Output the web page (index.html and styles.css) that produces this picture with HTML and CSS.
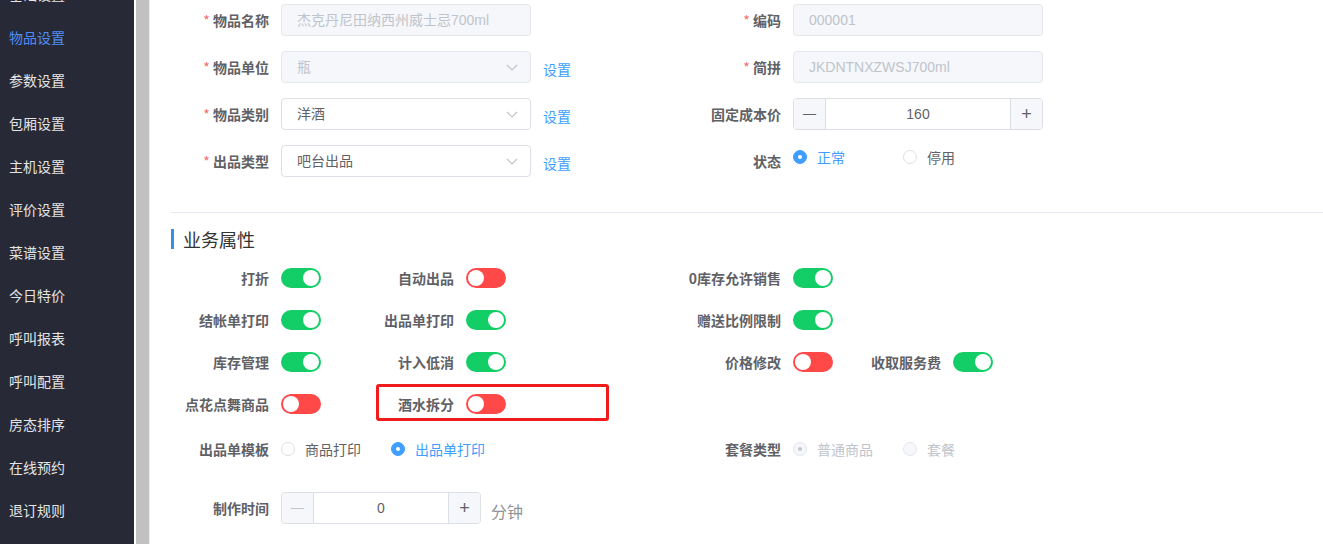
FILE: index.html
```html
<!DOCTYPE html>
<html lang="zh-CN">
<head>
  <meta charset="UTF-8">
  <meta name="viewport" content="width=device-width, initial-scale=1.0">
  <title>物品设置</title>
  <link rel="stylesheet" href="styles.css">
</head>
<body>
  <div class="layout">
    <aside class="sidebar">
      <ul class="menu">
        <li>基础设置</li>
        <li class="active">物品设置</li>
        <li>参数设置</li>
        <li>包厢设置</li>
        <li>主机设置</li>
        <li>评价设置</li>
        <li>菜谱设置</li>
        <li>今日特价</li>
        <li>呼叫报表</li>
        <li>呼叫配置</li>
        <li>房态排序</li>
        <li>在线预约</li>
        <li>退订规则</li>
      </ul>
    </aside>
    <div class="gutter"></div>

    <main class="content">
      <div class="form-row">
        <div class="form-item half">
          <label class="form-label"><span class="req">*</span> 物品名称</label>
          <div class="input disabled">杰克丹尼田纳西州威士忌700ml</div>
        </div>
        <div class="form-item">
          <label class="form-label"><span class="req">*</span> 编码</label>
          <div class="input disabled">000001</div>
        </div>
      </div>

      <div class="form-row">
        <div class="form-item half">
          <label class="form-label"><span class="req">*</span> 物品单位</label>
          <div class="input select disabled">瓶
            <svg class="arrow" width="12" height="7" viewBox="0 0 12 7"><path d="M1 1 L6 6 L11 1" fill="none" stroke="#c0c4cc" stroke-width="1.2"/></svg>
          </div>
          <a class="link">设置</a>
        </div>
        <div class="form-item">
          <label class="form-label"><span class="req">*</span> 简拼</label>
          <div class="input disabled">JKDNTNXZWSJ700ml</div>
        </div>
      </div>

      <div class="form-row">
        <div class="form-item half">
          <label class="form-label"><span class="req">*</span> 物品类别</label>
          <div class="input select">洋酒
            <svg class="arrow" width="12" height="7" viewBox="0 0 12 7"><path d="M1 1 L6 6 L11 1" fill="none" stroke="#c0c4cc" stroke-width="1.2"/></svg>
          </div>
          <a class="link">设置</a>
        </div>
        <div class="form-item">
          <label class="form-label">固定成本价</label>
          <div class="number">
            <span class="num-btn">&#8212;</span>
            <span class="num-value">160</span>
            <span class="num-btn">+</span>
          </div>
        </div>
      </div>

      <div class="form-row">
        <div class="form-item half">
          <label class="form-label"><span class="req">*</span> 出品类型</label>
          <div class="input select">吧台出品
            <svg class="arrow" width="12" height="7" viewBox="0 0 12 7"><path d="M1 1 L6 6 L11 1" fill="none" stroke="#c0c4cc" stroke-width="1.2"/></svg>
          </div>
          <a class="link">设置</a>
        </div>
        <div class="form-item status">
          <label class="form-label">状态</label>
          <span class="radio checked"><i></i>正常</span>
          <span class="radio"><i></i>停用</span>
        </div>
      </div>

      <div class="divider"></div>

      <h3 class="section-title">业务属性</h3>

      <div class="switch-row">
        <div class="sw-item c1"><label class="form-label">打折</label><span class="switch on"></span></div>
        <div class="sw-item c2"><label class="form-label">自动出品</label><span class="switch off"></span></div>
        <div class="sw-item c3"><label class="form-label">0库存允许销售</label><span class="switch on"></span></div>
      </div>
      <div class="switch-row">
        <div class="sw-item c1"><label class="form-label">结帐单打印</label><span class="switch on"></span></div>
        <div class="sw-item c2"><label class="form-label">出品单打印</label><span class="switch on"></span></div>
        <div class="sw-item c3"><label class="form-label">赠送比例限制</label><span class="switch on"></span></div>
      </div>
      <div class="switch-row">
        <div class="sw-item c1"><label class="form-label">库存管理</label><span class="switch on"></span></div>
        <div class="sw-item c2"><label class="form-label">计入低消</label><span class="switch on"></span></div>
        <div class="sw-item c3"><label class="form-label">价格修改</label><span class="switch off"></span></div>
        <div class="sw-item c4"><label class="form-label">收取服务费</label><span class="switch on"></span></div>
      </div>
      <div class="switch-row">
        <div class="sw-item c1"><label class="form-label">点花点舞商品</label><span class="switch off"></span></div>
        <div class="sw-item c2 marked"><label class="form-label">酒水拆分</label><span class="switch off"></span></div>
      </div>

      <div class="radio-row">
        <div class="form-item half">
          <label class="form-label">出品单模板</label>
          <span class="radio"><i></i>商品打印</span>
          <span class="radio checked"><i></i>出品单打印</span>
        </div>
        <div class="form-item">
          <label class="form-label">套餐类型</label>
          <span class="radio checked is-disabled"><i></i>普通商品</span>
          <span class="radio is-disabled"><i></i>套餐</span>
        </div>
      </div>

      <div class="form-row time-row">
        <div class="form-item">
          <label class="form-label">制作时间</label>
          <div class="number short">
            <span class="num-btn muted">&#8212;</span>
            <span class="num-value">0</span>
            <span class="num-btn">+</span>
          </div>
          <span class="unit">分钟</span>
        </div>
      </div>
    </main>
  </div>
</body>
</html>
```

FILE: styles.css
```css
body {
  margin: 0;
  font-family: "Liberation Sans", "Noto Sans CJK SC", sans-serif;
  font-size: 14px;
  color: #606266;
  background: #fff;
}

.layout {
  display: flex;
  height: 544px;
  overflow: hidden;
}

.sidebar {
  width: 134px;
  flex: none;
  background-color: #272a36;
  overflow: hidden;
}

.menu {
  list-style: none;
  margin: -27px 0 0 0;
  padding: 0;
}

.menu li {
  height: 43px;
  line-height: 43px;
  padding-left: 9px;
  color: #e4e4e4;
  font-family: "Noto Sans CJK SC", sans-serif;
  font-size: 14px;
}

.menu li.active {
  color: #4f8ef7;
}

.gutter {
  width: 13px;
  flex: none;
  margin-left: 2px;
  background-color: #c1c1c1;
  border-right: 1px solid #ececec;
}

.content {
  flex: 1;
  padding: 4px 0 0 21px;
}

/* form rows */
.form-row {
  display: flex;
  height: 32px;
  margin-bottom: 15px;
}

.form-item {
  display: flex;
  align-items: center;
}

.form-item.half {
  width: 512px;
  flex: none;
}

.form-label {
  width: 110px;
  flex: none;
  box-sizing: border-box;
  padding-right: 12px;
  text-align: right;
  font-family: "Noto Sans CJK SC", sans-serif;
  font-weight: bold;
  color: #5f6166;
  white-space: nowrap;
}

.req {
  color: #f56c6c;
  font-weight: normal;
}

.input {
  position: relative;
  width: 250px;
  height: 32px;
  box-sizing: border-box;
  border: 1px solid #dcdfe6;
  border-radius: 4px;
  padding: 0 15px;
  line-height: 30px;
  color: #606266;
  background: #fff;
}

.input.disabled {
  background-color: #f5f7fa;
  border-color: #e4e7ed;
  color: #c0c4cc;
}

.input .arrow {
  position: absolute;
  right: 12px;
  top: 12px;
}

.link {
  margin-left: 12px;
  margin-top: 3px;
  color: #409eff;
  font-family: "Noto Sans CJK SC", sans-serif;
}

.number {
  display: flex;
  width: 250px;
  height: 32px;
  box-sizing: border-box;
  border: 1px solid #dcdfe6;
  border-radius: 4px;
  overflow: hidden;
}

.number.short {
  width: 200px;
}

.num-btn {
  width: 31px;
  flex: none;
  background-color: #f5f7fa;
  text-align: center;
  line-height: 30px;
  color: #606266;
  font-size: 13px;
}

.num-btn:first-child {
  border-right: 1px solid #dcdfe6;
}

.num-btn:last-child {
  border-left: 1px solid #dcdfe6;
  font-size: 18px;
}

.num-btn.muted {
  color: #c0c4cc;
}

.num-value {
  flex: 1;
  text-align: center;
  line-height: 30px;
  color: #606266;
}

.unit {
  margin-left: 10px;
  margin-top: 6px;
  font-size: 16px;
  color: #909399;
  font-family: "Noto Sans CJK SC", sans-serif;
}

/* radios */
.radio {
  display: flex;
  align-items: center;
  width: 110px;
  flex: none;
  color: #606266;
  font-family: "Noto Sans CJK SC", sans-serif;
  white-space: nowrap;
}

.radio i {
  width: 14px;
  height: 14px;
  box-sizing: border-box;
  border: 1px solid #dcdfe6;
  border-radius: 50%;
  margin-right: 10px;
  background: #fff;
  position: relative;
}

.radio.checked {
  color: #409eff;
}

.radio.checked i {
  background-color: #409eff;
  border-color: #409eff;
}

.radio.checked i::after {
  content: "";
  position: absolute;
  left: 4px;
  top: 4px;
  width: 4px;
  height: 4px;
  border-radius: 50%;
  background: #fff;
}

.radio.is-disabled {
  color: #c0c4cc;
}

.radio.is-disabled i {
  background-color: #f5f7fa;
  border-color: #e4e7ed;
}

.radio.checked.is-disabled i::after {
  background: #c0c4cc;
}

.status .radio {
  margin-top: -8px;
}

.divider {
  height: 1px;
  background-color: #e8eaf1;
  margin-top: 35px;
}

.section-title {
  margin: 16px 0 19px 0;
  height: 20px;
  line-height: 20px;
  padding-left: 9px;
  border-left: 3px solid #3a8ee6;
  font-size: 18px;
  font-weight: normal;
  color: #333;
  font-family: "Noto Sans CJK SC", sans-serif;
}

/* switches */
.switch-row {
  display: flex;
  height: 20px;
  margin-bottom: 22px;
}

.sw-item {
  display: flex;
  align-items: center;
  flex: none;
}

.sw-item.c1 { width: 205px; }
.sw-item.c2 { width: 307px; }
.sw-item.c2 .form-label { width: 90px; }
.sw-item.c3 { width: 160px; }

.switch {
  position: relative;
  width: 40px;
  height: 20px;
  border-radius: 10px;
  flex: none;
}

.switch::after {
  content: "";
  position: absolute;
  top: 2px;
  left: 2px;
  width: 16px;
  height: 16px;
  border-radius: 50%;
  background: #fff;
}

.switch.on { background-color: #13ce66; }
.switch.on::after { left: 22px; }
.switch.off { background-color: #ff4949; }

.marked {
  position: relative;
}

.marked::after {
  content: "";
  position: absolute;
  left: 0;
  top: -10px;
  width: 233px;
  height: 37px;
  box-sizing: border-box;
  border: 3px solid #f01c1c;
  border-radius: 3px;
}

.radio-row {
  display: flex;
  height: 20px;
  margin-top: 25px;
}

.time-row {
  margin-top: 33px;
}
```
